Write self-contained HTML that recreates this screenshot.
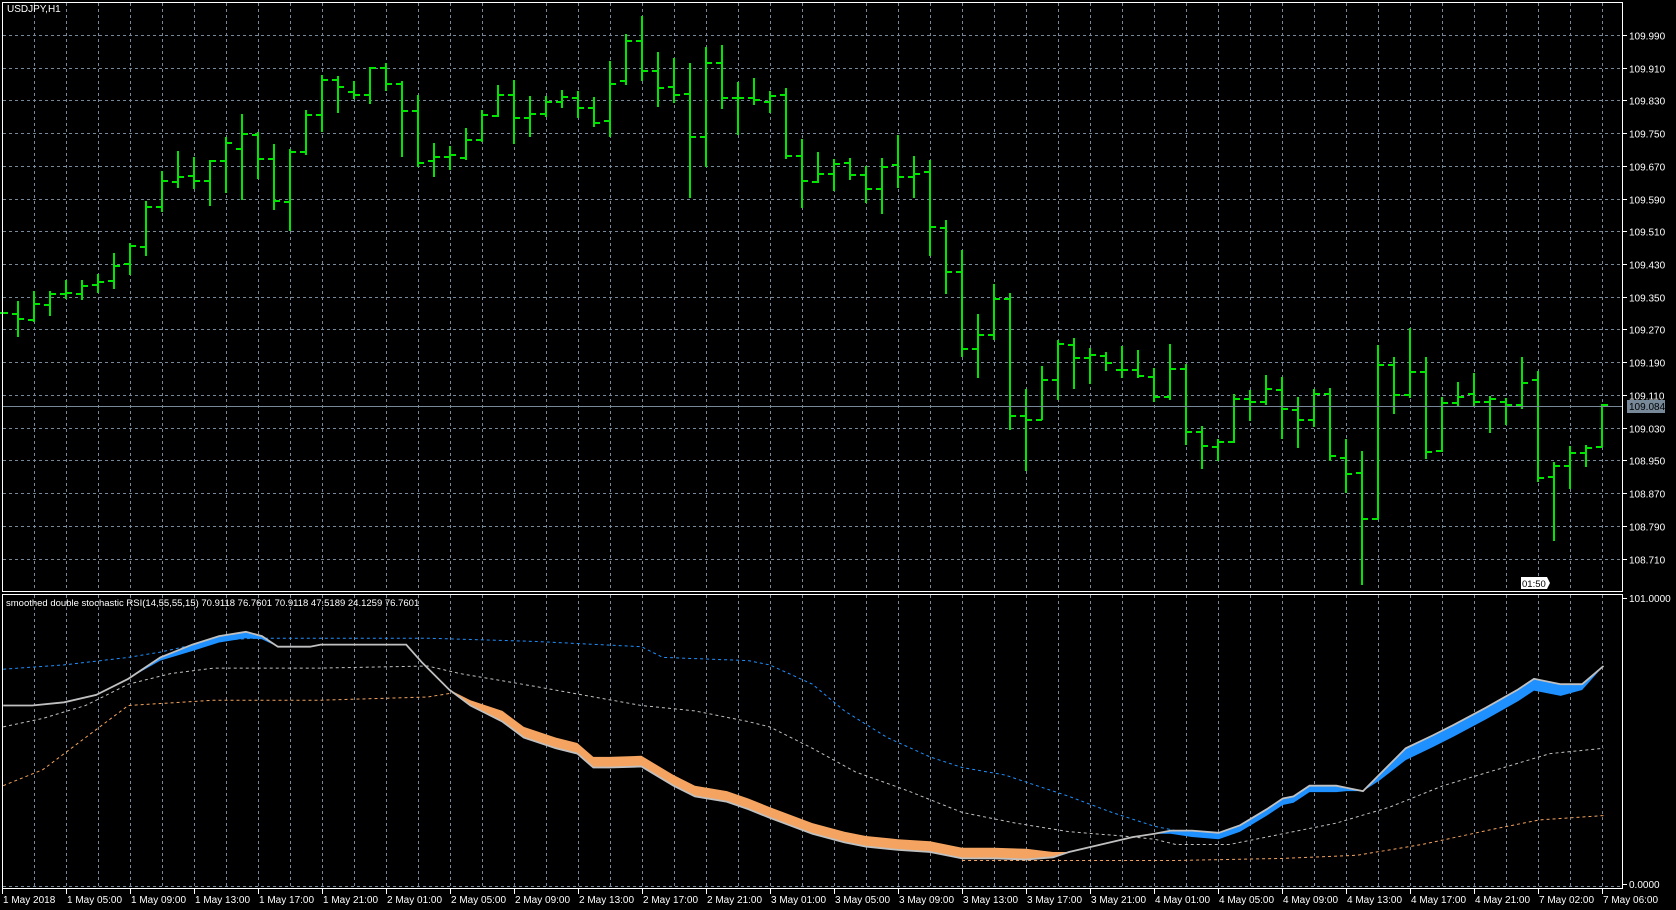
<!DOCTYPE html>
<html><head><meta charset="utf-8"><style>
html,body{margin:0;padding:0;background:#000;width:1676px;height:910px;overflow:hidden}
svg{display:block}
text{font-family:"Liberation Sans",sans-serif;font-size:10px;fill:#fff}
</style></head><body>
<svg id="s" width="1676" height="910" xmlns="http://www.w3.org/2000/svg">
<rect width="1676" height="910" fill="#000"/>
<g id="grid" stroke="#778899" stroke-width="1" stroke-dasharray="3,3" shape-rendering="crispEdges"></g>
<g id="ind"></g>
<g id="bars" fill="#00e600" shape-rendering="crispEdges"></g>
<line x1="2" y1="406.5" x2="1623" y2="406.5" stroke="#778899" shape-rendering="crispEdges"/>
<g fill="none" stroke="#fff" shape-rendering="crispEdges">
<rect x="2.5" y="2.5" width="1620" height="589"/>
<rect x="2.5" y="594.5" width="1620" height="294"/>
</g>
<g id="axis" stroke="#fff" shape-rendering="crispEdges"></g>
<g id="labels"></g>
<rect x="1627" y="400" width="38" height="13" fill="#778899"/>
<text x="1629" y="410" style="fill:#000">109.084</text>
<text x="7" y="12">USDJPY,H1</text>
<text x="6" y="606" style="font-size:9.5px">smoothed double stochastic RSI(14,55,55,15) 70.9118 76.7601 70.9118 47.5189 24.1259 76.7601</text>
<path d="M1521 577 H1547 L1550 583 L1547 589 H1521 Z" fill="#fff"/>
<text x="1522" y="587" style="fill:#000;font-size:9.5px">01:50</text>
<text x="1629" y="602">101.0000</text>
<text x="1629" y="888">0.0000</text>
</svg>
<script>
var NS="http://www.w3.org/2000/svg";
function el(p,t,a,txt){var e=document.createElementNS(NS,t);for(var k in a)e.setAttribute(k,a[k]);if(txt)e.textContent=txt;p.appendChild(e);return e;}
var g=document.getElementById('grid'),ax=document.getElementById('axis'),lb=document.getElementById('labels');
var prices=["109.990","109.910","109.830","109.750","109.670","109.590","109.510","109.430","109.350","109.270","109.190","109.110","109.030","108.950","108.870","108.790","108.710"];
for(var i=0;i<prices.length;i++){var y=Math.round(35+i*32.72)+0.5;
 el(g,'line',{x1:3,y1:y,x2:1622,y2:y});
 el(ax,'line',{x1:1623,y1:y,x2:1627,y2:y});
 el(lb,'text',{x:1629,y:y+4},prices[i]);}
el(g,'line',{x1:3,y1:886.5,x2:1622,y2:886.5});
for(var x=34;x<1620;x+=32){el(g,'line',{x1:x+0.5,y1:3,x2:x+0.5,y2:591});el(g,'line',{x1:x+0.5,y1:595,x2:x+0.5,y2:888});}
el(ax,'line',{x1:1623,y1:598.5,x2:1627,y2:598.5});el(ax,'line',{x1:1623,y1:884.5,x2:1627,y2:884.5});
var tl=["1 May 2018","1 May 05:00","1 May 09:00","1 May 13:00","1 May 17:00","1 May 21:00","2 May 01:00","2 May 05:00","2 May 09:00","2 May 13:00","2 May 17:00","2 May 21:00","3 May 01:00","3 May 05:00","3 May 09:00","3 May 13:00","3 May 17:00","3 May 21:00","4 May 01:00","4 May 05:00","4 May 09:00","4 May 13:00","4 May 17:00","4 May 21:00","7 May 02:00","7 May 06:00"];
for(var i=0;i<tl.length;i++){var x=2+64*i;el(ax,'line',{x1:x+0.5,y1:889,x2:x+0.5,y2:894});el(lb,'text',{x:x+1,y:903},tl[i]);}
var B=[[313,313,313,313],[301,337,314,319],[291,322,320,304],[291,316,305,294],[280,299,294,293],[280,300,294,286],[274,293,285,282],[253,289,281,266],[243,275,264,246],[201,256,247,207],
[171,212,207,181],[151,188,182,177],[157,189,176,181],[160,206,181,161],[137,193,161,143],[114,200,149,134],[132,179,135,159],[144,210,159,201],[149,231,202,152],[110,155,152,115],
[75,132,115,80],[76,113,80,87],[81,99,92,95],[67,104,95,68],[63,91,68,84],[81,157,84,111],[95,167,111,163],[143,177,161,157],[146,170,157,155],[128,160,158,140],
[110,142,140,115],[85,117,116,95],[80,144,95,118],[96,137,118,114],[96,117,114,102],[90,108,102,97],[91,118,98,108],[97,127,108,123],[61,137,121,84],[34,85,81,41],
[16,81,41,71],[52,107,71,88],[58,103,87,95],[63,198,94,137],[47,167,137,63],[45,109,63,98],[82,135,98,98],[78,105,98,100],[91,113,102,96],[88,159,95,156],
[139,208,156,181],[152,183,182,174],[159,191,174,164],[158,180,163,175],[166,203,175,189],[158,214,189,167],[135,188,165,177],[156,198,177,174],[160,256,172,227],[220,294,228,272],
[250,357,272,349],[314,378,349,335],[284,340,335,299],[293,430,299,416],[389,471,416,420],[366,420,420,380],[340,400,380,344],[338,389,345,358],[348,384,358,355],[352,371,356,363],
[346,378,370,370],[350,378,370,376],[368,402,377,397],[344,400,397,369],[364,445,369,432],[426,469,432,446],[439,461,447,442],[394,443,442,399],[390,421,399,402],[375,405,402,389],
[377,439,390,409],[397,448,410,420],[389,427,420,394],[388,461,394,456],[439,493,458,474],[451,585,473,519],[345,519,519,365],[357,414,365,395],[328,398,395,372],[357,459,372,452],
[397,452,451,403],[382,407,403,397],[373,406,394,402],[396,433,402,399],[398,425,402,405],[357,409,405,383],[371,482,380,478],[462,541,477,466],[446,489,466,453],[445,467,453,448],[405,447,447,405]];
var bg=document.getElementById('bars');
for(var i=0;i<B.length;i++){var b=B[i],x=1+16*i;
 if(i>0)el(bg,'rect',{x:x,y:b[0],width:2,height:b[1]-b[0]});
 el(bg,'rect',{x:x-5,y:b[2]-1,width:6,height:2});
 el(bg,'rect',{x:x,y:b[3]-1,width:7,height:2});}
var S=1.069;
function pts(a){return a.map(function(p){return (p[0]*S).toFixed(1)+','+(p[1]*S).toFixed(1)}).join(' ');}
var ig=document.getElementById('ind');
var blue=[[3,626],[60,622],[120,615],[150,610],[200,599],[240,597],[400,597],[500,600],[600,605],[620,615],[700,618],[720,622],[760,640],[790,665],[830,690],[870,708],[900,718],[940,725],[970,735],[1000,745],[1040,760],[1080,773],[1100,777],[1140,780]];
var grayd=[[3,680],[40,672],[80,660],[120,640],[160,630],[200,625],[300,625],[400,623],[430,630],[500,642],[600,660],[650,665],[700,675],[720,680],[760,700],[800,722],[850,740],[900,760],[950,770],[1000,778],[1050,782],[1080,785],[1100,790],[1150,790],[1200,780],[1250,770],[1300,755],[1350,735],[1400,720],[1450,705],[1500,700]];
var orng=[[3,735],[40,720],[80,690],[120,660],[200,655],[300,655],[400,652],[425,648]];
var orng2=[[900,805],[1100,805],[1200,803],[1270,800],[1330,790],[1400,775],[1440,767],[1500,763]];
el(ig,'polyline',{points:pts(blue),fill:'none',stroke:'#1e90ff','stroke-width':1,'stroke-dasharray':'3,3'});
el(ig,'polyline',{points:pts(grayd),fill:'none',stroke:'#c0c0c0','stroke-width':1,'stroke-dasharray':'3,3'});
el(ig,'polyline',{points:pts(orng),fill:'none',stroke:'#f4a460','stroke-width':1,'stroke-dasharray':'3,3'});
el(ig,'polyline',{points:pts(orng2),fill:'none',stroke:'#f4a460','stroke-width':1,'stroke-dasharray':'3,3'});
var main=[[3,660],[30,660],[60,657],[90,650],[120,635],[150,615],[180,603],[205,595],[230,591],[245,595],[260,605],[290,605],[300,603],[380,603],[395,620],[420,645],[440,660],[470,675],[490,690],[520,700],[540,705],[555,718],[570,718],[600,717],[630,735],[650,745],[680,750],[700,757],[720,765],[760,780],[790,788],[810,792],[840,795],[870,797],[900,803],[930,803],[960,804],[985,802],[1000,797],[1030,790],[1060,783],[1080,780],[1095,777],[1115,777],[1140,779],[1160,772],[1185,757],[1200,747],[1210,745],[1225,735],[1250,735],[1260,737],[1275,740],[1290,725],[1315,700],[1340,688],[1360,678],[1390,662],[1420,645],[1435,635],[1460,640],[1480,640],[1500,623]];
function band(x0,x1,col,dir,th){var seg=main.filter(function(p){return p[0]>=x0&&p[0]<=x1});
 var top=seg.map(function(p,k){var t=th*Math.min(1,k/2,(seg.length-1-k)/2);return [p[0],p[1]+dir*t];});
 var poly=seg.concat(top.reverse());el(ig,'polygon',{points:pts(poly),fill:col});}
band(120,260,'#1e90ff',1,6);
band(420,1000,'#f4a460',-1,10);
band(1080,1275,'#1e90ff',1,6);
band(1275,1500,'#1e90ff',1,11);
el(ig,'polyline',{points:pts(main),fill:'none',stroke:'#c0c0c0','stroke-width':1.8});
</script>
</body></html>
